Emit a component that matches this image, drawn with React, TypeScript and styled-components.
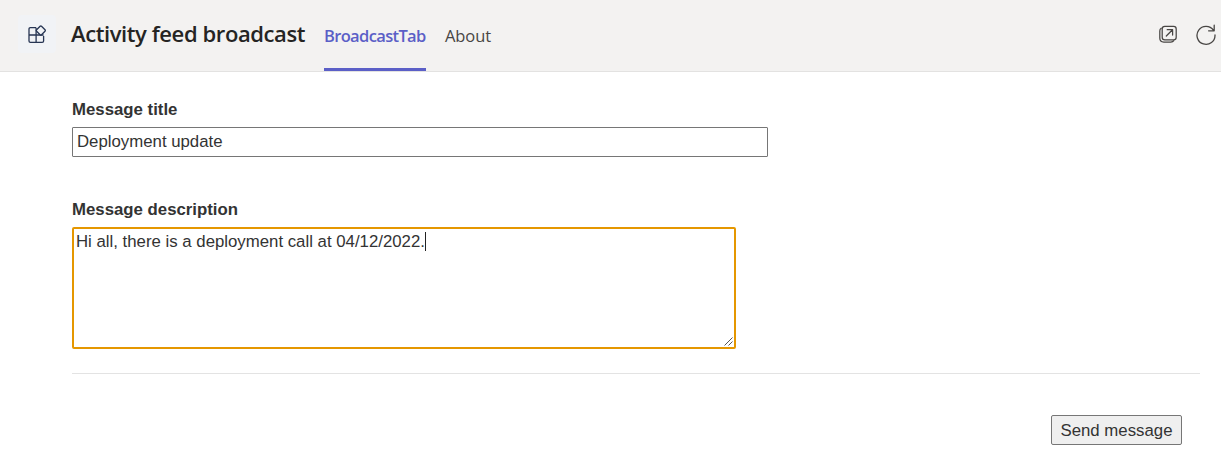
import React from "react";
import styled, { createGlobalStyle } from "styled-components";

const GlobalStyle = createGlobalStyle`
  *, *::before, *::after { box-sizing: border-box; }
  body { margin: 0; background: #fff; overflow: hidden; }
`;

const Page = styled.div`
  height: 468px;
  font-family: "Liberation Sans", Arial, sans-serif;
  font-size: 16.8px;
  color: #333;
`;

const Header = styled.header`
  display: flex;
  height: 72px;
  padding: 0 5px 0 18px;
  background: #f3f2f1;
  border-bottom: 1px solid #e3e2e1;
  font-family: "Open Sans", "Noto Sans", sans-serif;
`;

const AppIcon = styled.div`
  display: grid;
  place-items: center;
  width: 38px;
  height: 38px;
  margin-top: 15px;
  padding-top: 1px;
  border-radius: 4px;
  background: #f1f3f6;
`;

const Title = styled.h1`
  width: 235px;
  margin: 0 0 0 15px;
  font-size: 22px;
  font-weight: 600;
  line-height: 67px;
  letter-spacing: -0.4px;
  white-space: nowrap;
  color: #252423;
`;

const Tab = styled.a<{ $active?: boolean; $width: number }>`
  width: ${(p) => p.$width}px;
  margin-left: ${(p) => (p.$active ? 18 : 19)}px;
  height: 71px;
  line-height: 72px;
  font-size: 16.5px;
  font-weight: ${(p) => (p.$active ? 600 : 400)};
  letter-spacing: ${(p) => (p.$active ? "-0.65px" : "-0.1px")};
  white-space: nowrap;
  color: ${(p) => (p.$active ? "#5b5fc7" : "#484644")};
  border-bottom: 3px solid ${(p) => (p.$active ? "#5b5fc7" : "transparent")};
`;

const Actions = styled.div`
  display: flex;
  gap: 18px;
  margin-left: auto;
  padding-top: 24px;
`;

const Main = styled.main`
  display: flex;
  flex-direction: column;
  padding: 27px 21px 0 72px;
`;

const Label = styled.label`
  height: 28px;
  line-height: 22px;
  font-weight: 700;
`;

const TitleInput = styled.input`
  width: 696px;
  height: 30px;
  margin-bottom: 42px;
  padding: 0 4px;
  border: 1px solid #767676;
  border-radius: 1px;
  outline: none;
  background: #fff;
  font: inherit;
  color: inherit;
`;

const Description = styled.div`
  display: flex;
  justify-content: space-between;
  width: 664px;
  height: 122px;
  padding: 2px 1px 1px 2px;
  border: 2px solid #e59700;
  border-radius: 2px;
  line-height: 22px;
`;

const Caret = styled.span`
  display: inline-block;
  width: 1px;
  height: 19px;
  vertical-align: -4px;
  background: #222;
`;

const Grip = styled.svg`
  align-self: flex-end;
`;

const Divider = styled.hr`
  width: 100%;
  height: 1px;
  margin: 24px 0 41px;
  border: 0;
  background: #e3e3e3;
`;

const SendButton = styled.button`
  align-self: flex-end;
  width: 131px;
  height: 30px;
  margin-right: 18px;
  padding: 2px 0 0;
  border: 1px solid #767676;
  border-radius: 2px;
  background: #efefef;
  font: inherit;
  color: inherit;
`;

export default function App() {
  return (
    <Page>
      <GlobalStyle />
      <Header>
        <AppIcon>
          <svg width="20" height="20" viewBox="0 0 20 20" fill="none" stroke="#273553" strokeWidth="1.3" strokeLinejoin="round">
            <path d="M9.1 2.7H3.4Q2 2.7 2 4.1v11.8q0 1.4 1.4 1.4h11.8q1.4 0 1.4-1.4v-4.8M9.1 2.7v14.6M2 10h14.6" />
            <path d="M13.1 1.3q.7-.7 1.4 0l3.5 3.5q.7.7 0 1.4l-3.5 3.5q-.7.7-1.4 0L9.6 6.2q-.7-.7 0-1.4z" fill="#f1f3f6" />
          </svg>
        </AppIcon>
        <Title>Activity feed broadcast</Title>
        <Tab $active $width={102}>BroadcastTab</Tab>
        <Tab $width={46}>About</Tab>
        <Actions>
          <svg width="20" height="20" viewBox="0 0 20 20" fill="none" stroke="#484644" strokeWidth="1.25" strokeLinecap="round" strokeLinejoin="round">
            <rect x="4.2" y="2.4" width="14" height="13.4" rx="2.6" />
            <path d="M3.2 4.2Q1.8 5 1.8 7v7q0 4 4 4h7q2.1 0 3-1.3M8.3 12l6.2-6.2M9.2 5.7h5.4v5.4" />
          </svg>
          <svg width="20" height="22" viewBox="0 0 20 22" fill="none" stroke="#484644" strokeWidth="1.3" strokeLinecap="round" strokeLinejoin="round">
            <path d="M17.4 6.2A9 9 0 1 0 19 11M18.2 1.2v5.6h-5.6" />
          </svg>
        </Actions>
      </Header>
      <Main>
        <Label htmlFor="title">Message title</Label>
        <TitleInput id="title" defaultValue="Deployment update" />
        <Label>Message description</Label>
        <Description role="textbox">
          <span>Hi all, there is a deployment call at 04/12/2022.<Caret /></span>
          <Grip width="9" height="9" viewBox="0 0 9 9" stroke="#555" strokeWidth="1">
            <path d="M0.5 8.5l8-8M4.5 8.5l4-4" />
          </Grip>
        </Description>
        <Divider />
        <SendButton>Send message</SendButton>
      </Main>
    </Page>
  );
}
